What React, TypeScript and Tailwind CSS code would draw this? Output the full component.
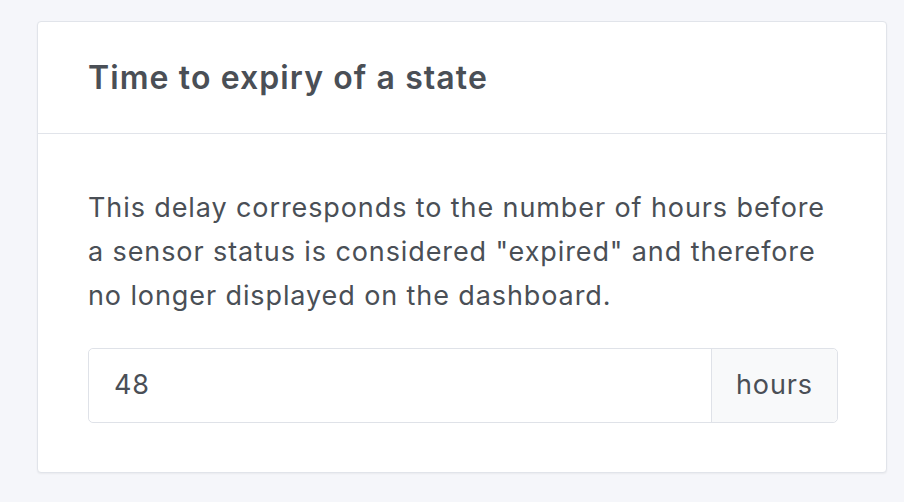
export default function App() {
  return (
    <div className="min-h-screen bg-[#f5f6fa] pl-[37px] pt-[21px]" style={{ fontFamily: 'Inter, "Liberation Sans", Arial, sans-serif' }}>
      <div className="w-[850px] rounded-[4px] border border-[#e1e4ea] bg-white shadow-[0_1px_2px_rgba(0,0,0,0.05)]">
        <div className="flex h-[112px] items-center border-b border-[#e1e4ea] px-[50px]">
          <h2 className="text-[32px] font-semibold leading-[40px] tracking-[1.1px] text-[#4a4f56]">Time to expiry of a state</h2>
        </div>
        <div className="px-[50px] pt-[52px] pb-[49px]">
          <p className="text-[27px] leading-[44px] tracking-[0.9px] text-[#4a4f56]">
            This delay corresponds to the number of hours before a sensor status is considered "expired" and therefore no longer displayed on the dashboard.
          </p>
          <div className="mt-[30px] flex h-[75px] w-[750px] rounded-[5px] border border-[#dfe2e8]">
            <input
              defaultValue="48"
              className="min-w-0 flex-1 rounded-l-[5px] bg-white px-[25px] text-[27px] tracking-[0.9px] text-[#4a4f56] outline-none"
            />
            <span className="flex items-center rounded-r-[5px] border-l border-[#dfe2e8] bg-[#f8f9fa] px-[24px] text-[27px] tracking-[0.9px] text-[#4a4f56]">
              hours
            </span>
          </div>
        </div>
      </div>
    </div>
  )
}
